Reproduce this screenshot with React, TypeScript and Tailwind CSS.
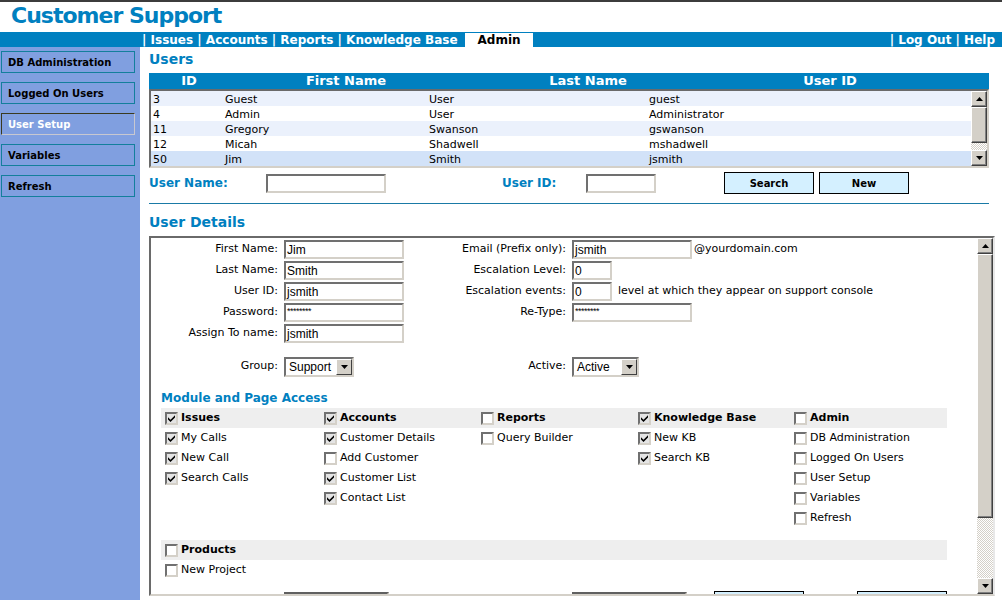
import React from 'react';

const blue = 'text-[#0080c0]';

const users = [
  { id: '3', first: 'Guest', last: 'User', uid: 'guest' },
  { id: '4', first: 'Admin', last: 'User', uid: 'Administrator' },
  { id: '11', first: 'Gregory', last: 'Swanson', uid: 'gswanson' },
  { id: '12', first: 'Micah', last: 'Shadwell', uid: 'mshadwell' },
  { id: '50', first: 'Jim', last: 'Smith', uid: 'jsmith' },
];

const modules = [
  { title: 'Issues', on: true, items: [['My Calls', true], ['New Call', true], ['Search Calls', true]] },
  { title: 'Accounts', on: true, items: [['Customer Details', true], ['Add Customer', false], ['Customer List', true], ['Contact List', true]] },
  { title: 'Reports', on: false, items: [['Query Builder', false]] },
  { title: 'Knowledge Base', on: true, items: [['New KB', true], ['Search KB', true]] },
  { title: 'Admin', on: false, items: [['DB Administration', false], ['Logged On Users', false], ['User Setup', false], ['Variables', false], ['Refresh', false]] },
];

function Arrow({ up }: { up?: boolean }) {
  return (
    <div className="w-[16px] h-[16px] shrink-0 bg-[#d4d0c8] border border-t-white border-l-white border-r-[#404040] border-b-[#404040] shadow-[inset_-1px_-1px_0_#808080] flex items-center justify-center">
      <svg width="7" height="4" viewBox="0 0 7 4">
        {up ? <polygon points="3.5,0 7,4 0,4" fill="#000" /> : <polygon points="0,0 7,0 3.5,4" fill="#000" />}
      </svg>
    </div>
  );
}

function Scrollbar({ thumb }: { thumb: number }) {
  return (
    <div className="w-[16px] h-full flex flex-col shrink-0">
      <Arrow up />
      <div
        className="w-[16px] shrink-0 bg-[#d4d0c8] border border-t-white border-l-white border-r-[#404040] border-b-[#404040] shadow-[inset_-1px_-1px_0_#808080]"
        style={{ height: thumb }}
      />
      <div className="flex-1 bg-[repeating-conic-gradient(#d4d0c8_0_25%,#ffffff_0_50%)] bg-[length:2px_2px]" />
      <Arrow />
    </div>
  );
}

function Input({ w, value, pw }: { w: number; value?: string; pw?: boolean }) {
  return (
    <div
      className="h-[19px] shrink-0 bg-white border-2 border-t-[#707070] border-l-[#707070] border-r-[#d4d0c8] border-b-[#d4d0c8] pl-[1px] flex items-center font-['Liberation_Sans'] text-[12px] leading-none text-black overflow-hidden"
      style={{ width: w }}
    >
      {pw ? <span className="text-[9px] tracking-[-0.5px] -mt-[3px]">********</span> : value}
    </div>
  );
}

function Select({ w, value }: { w: number; value: string }) {
  return (
    <div
      className="h-[20px] bg-white border-2 border-t-[#707070] border-l-[#707070] border-r-[#d4d0c8] border-b-[#d4d0c8] flex items-center font-['Liberation_Sans'] text-[12px] text-black"
      style={{ width: w }}
    >
      <span className="flex-1 pl-[3px] leading-none">{value}</span>
      <div className="w-[16px] h-[16px] bg-[#d4d0c8] border border-t-white border-l-white border-r-[#404040] border-b-[#404040] flex items-center justify-center">
        <svg width="7" height="4" viewBox="0 0 7 4">
          <polygon points="0,0 7,0 3.5,4" fill="#000" />
        </svg>
      </div>
    </div>
  );
}

function Check({ on }: { on: boolean }) {
  return (
    <span
      className={`w-[13px] h-[13px] shrink-0 border-2 border-t-[#707070] border-l-[#707070] border-r-[#d4d0c8] border-b-[#d4d0c8] flex items-center justify-center ${on ? 'bg-[#e4e4e4]' : 'bg-white'}`}
    >
      {on && (
        <svg width="7" height="7" viewBox="0 0 7 7">
          <polygon points="0,2.3 2.5,4.8 7,0.3 7,2.6 2.5,7 0,4.5" fill="#000" />
        </svg>
      )}
    </span>
  );
}

function FormRow({ label, children, rlabel, right }: { label: string; children?: React.ReactNode; rlabel?: string; right?: React.ReactNode }) {
  return (
    <div className="flex items-center h-[21px]">
      <div className="w-[133px] text-right pr-[6px]">{label}</div>
      <div className="w-[157px]">{children}</div>
      <div className="w-[131px] text-right pr-[6px]">{rlabel}</div>
      <div className="flex items-center">{right}</div>
    </div>
  );
}

export default function App() {
  return (
    <div className="w-[1002px] h-[600px] overflow-hidden bg-white font-['DejaVu_Sans',sans-serif] text-[11px] text-black">
      <div className="h-[2px] bg-[#3c3c3c]" />
      {/* title */}
      <div className="h-[30px] pl-[11px] flex items-start">
        <h1 className={`text-[22px] font-bold leading-[28px] tracking-[-1px] ${blue}`}>Customer Support</h1>
      </div>
      {/* nav */}
      <div className="h-[15px] bg-[#0080c0] flex items-end text-[12px] font-bold text-white leading-[14px]">
        <div className="w-[142px]" />
        <div className="whitespace-pre">| Issues | Accounts | Reports | Knowledge Base</div>
        <div className="w-[68px] ml-[7px] h-[14px] bg-white text-black pl-[13px] self-end">Admin</div>
        <div className="flex-1" />
        <div className="whitespace-pre pr-[7px]">| Log Out | Help</div>
      </div>

      <div className="flex h-[553px]">
        {/* sidebar */}
        <div className="w-[140px] bg-[#809fe0] pt-[4px] pl-[1px] flex flex-col gap-[9px]">
          {['DB Administration', 'Logged On Users', 'User Setup', 'Variables', 'Refresh'].map((s) =>
            s === 'User Setup' ? (
              <div key={s} className="w-[134px] h-[22px] border border-t-[#3a3a20] border-l-[#3a3a20] border-r-[#c8c8d0] border-b-[#c8c8d0] flex items-center pl-[6px] pt-[1px] text-[10px] font-bold text-white">
                {s}
              </div>
            ) : (
              <div key={s} className="w-[134px] h-[22px] border border-[#137f9c] flex items-center pl-[6px] pt-[1px] text-[10px] font-bold text-black">
                {s}
              </div>
            ),
          )}
        </div>

        {/* main */}
        <div className="flex-1 pl-[9px]">
          <div className={`text-[14px] font-bold leading-[16px] mt-[4px] ${blue}`}>Users</div>
          <div className="w-[840px] mt-[6px]">
            <div className="h-[16px] bg-[#0080c0] flex text-[13px] font-bold text-white leading-[16px]">
              <div className="w-[80px] text-center">ID</div>
              <div className="w-[234px] text-center">First Name</div>
              <div className="w-[250px] text-center">Last Name</div>
              <div className="w-[234px] text-center">User ID</div>
            </div>
            <div className="h-[79px] border-2 border-t-[#6a6a6a] border-l-[#6a6a6a] border-r-[#d4d0c8] border-b-[#d4d0c8] flex">
              <div className="flex-1">
                {users.map((u, i) => (
                  <div
                    key={u.id}
                    className={`h-[15px] flex items-center leading-none pt-[1px] ${i === 4 ? 'bg-[#d2e2f8]' : i % 2 === 0 ? 'bg-[#ebf1fc]' : 'bg-white'}`}
                  >
                    <div className="w-[74px] pl-[2px]">{u.id}</div>
                    <div className="w-[204px]">{u.first}</div>
                    <div className="w-[220px]">{u.last}</div>
                    <div>{u.uid}</div>
                  </div>
                ))}
              </div>
              <Scrollbar thumb={36} />
            </div>
          </div>

          {/* search */}
          <div className="flex items-center h-[22px] mt-[4px] text-[12px] font-bold">
            <div className={`w-[117px] ${blue}`}>User Name:</div>
            <Input w={120} />
            <div className={`w-[84px] ml-[116px] ${blue}`}>User ID:</div>
            <Input w={70} />
            <div className="ml-[68px] w-[90px] h-[22px] bg-[#d4f0ff] border border-black flex items-center justify-center text-[10px]">Search</div>
            <div className="ml-[5px] w-[90px] h-[22px] bg-[#d4f0ff] border border-black flex items-center justify-center text-[10px]">New</div>
          </div>
          <div className="w-[840px] h-[1px] bg-[#1a7aa6] mt-[9px]" />

          <div className={`text-[14px] font-bold leading-[16px] mt-[10px] ${blue}`}>User Details</div>

          {/* details */}
          <div className="w-[846px] h-[360px] mt-[6px] border-2 border-t-[#6a6a6a] border-l-[#6a6a6a] border-r-[#e8e8e8] border-b-[#d4d0c8] flex">
            <div className="flex-1 overflow-hidden pt-[1px]">
              <FormRow label="First Name:" rlabel="Email (Prefix only):" right={<><Input w={120} value="jsmith" /><span className="ml-[2px]">@yourdomain.com</span></>}>
                <Input w={120} value="Jim" />
              </FormRow>
              <FormRow label="Last Name:" rlabel="Escalation Level:" right={<Input w={40} value="0" />}>
                <Input w={120} value="Smith" />
              </FormRow>
              <FormRow label="User ID:" rlabel="Escalation events:" right={<><Input w={40} value="0" /><span className="ml-[6px]">level at which they appear on support console</span></>}>
                <Input w={120} value="jsmith" />
              </FormRow>
              <FormRow label="Password:" rlabel="Re-Type:" right={<Input w={120} pw />}>
                <Input w={120} pw />
              </FormRow>
              <FormRow label="Assign To name:">
                <Input w={120} value="jsmith" />
              </FormRow>
              <div className="mt-[12px]">
                <FormRow label="Group:" rlabel="Active:" right={<Select w={67} value="Active" />}>
                  <Select w={70} value="Support" />
                </FormRow>
              </div>

              <div className="pl-[10px] mt-[14px] w-[796px]">
                <div className={`text-[12px] font-bold leading-[14px] ${blue}`}>Module and Page Access</div>
                <div className="grid grid-cols-[159px_157px_157px_156px_157px] mt-[3px]">
                  {modules.map((m) => (
                    <div key={m.title}>
                      <div className="h-[20px] bg-[#eeeeee] flex items-center pl-[4px] gap-[3px] font-bold pt-[1px]">
                        <Check on={m.on} />
                        <span>{m.title}</span>
                      </div>
                      {m.items.map(([name, on]) => (
                        <div key={name as string} className="h-[20px] flex items-center pl-[4px] gap-[3px] pt-[1px]">
                          <Check on={on as boolean} />
                          <span>{name}</span>
                        </div>
                      ))}
                    </div>
                  ))}
                </div>
                <div className="mt-[12px] h-[20px] bg-[#eeeeee] flex items-center pl-[4px] gap-[3px] font-bold pt-[1px]">
                  <Check on={false} />
                  <span>Products</span>
                </div>
                <div className="h-[20px] flex items-center pl-[4px] gap-[3px] pt-[1px]">
                  <Check on={false} />
                  <span>New Project</span>
                </div>
                <div className="flex mt-[12px] h-[22px]">
                  <div className="ml-[123px] w-[105px] border-2 border-t-[#606060] border-l-[#606060] border-r-[#d4d0c8] border-b-[#d4d0c8]" />
                  <div className="ml-[183px] w-[116px] border-2 border-t-[#606060] border-l-[#606060] border-r-[#d4d0c8] border-b-[#d4d0c8]" />
                  <div className="ml-[27px] w-[90px] bg-[#d4f0ff] border border-black mt-[-1px]" />
                  <div className="ml-[53px] w-[90px] bg-[#d4f0ff] border border-black mt-[-1px]" />
                </div>
              </div>
            </div>
            <Scrollbar thumb={264} />
          </div>
        </div>
      </div>
    </div>
  );
}
